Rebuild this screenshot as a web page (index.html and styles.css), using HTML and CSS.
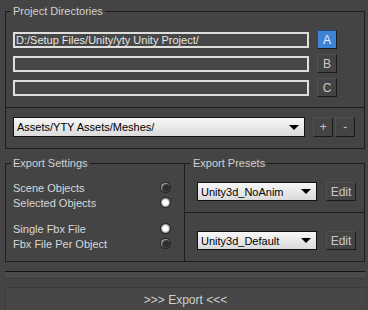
FILE: index.html
```html
<!DOCTYPE html>
<html lang="en">
<head>
  <meta charset="UTF-8">
  <meta name="viewport" content="width=device-width, initial-scale=1.0">
  <title>FBX Exporter</title>
  <link rel="stylesheet" href="styles.css">
</head>
<body>
  <div class="panel">
    <!-- Pastas do projeto -->
    <fieldset class="group dirs">
      <legend>Project Directories</legend>
      <div class="dir-row">
        <div class="field">D:/Setup Files/Unity/yty Unity Project/</div>
        <button class="btn active">A</button>
      </div>
      <div class="dir-row">
        <div class="field"></div>
        <button class="btn">B</button>
      </div>
      <div class="dir-row">
        <div class="field"></div>
        <button class="btn">C</button>
      </div>
    </fieldset>

    <div class="group assets">
      <div class="combo">Assets/YTY Assets/Meshes/<span class="arrow"></span></div>
      <button class="btn">+</button>
      <button class="btn">-</button>
    </div>

    <!-- Exportação -->
    <div class="export-row">
      <fieldset class="group settings">
        <legend>Export Settings</legend>
        <div class="opt-set">
          <div class="opt">Scene Objects<span class="radio"></span></div>
          <div class="opt">Selected Objects<span class="radio on"></span></div>
        </div>
        <div class="opt-set">
          <div class="opt">Single Fbx File<span class="radio on"></span></div>
          <div class="opt">Fbx File Per Object<span class="radio"></span></div>
        </div>
      </fieldset>

      <fieldset class="group presets">
        <legend>Export Presets</legend>
        <div class="preset">
          <div class="combo">Unity3d_NoAnim<span class="arrow"></span></div>
          <button class="btn">Edit</button>
        </div>
        <div class="preset last">
          <div class="combo">Unity3d_Default<span class="arrow"></span></div>
          <button class="btn">Edit</button>
        </div>
      </fieldset>
    </div>

    <div class="progress"></div>
    <button class="export">&gt;&gt;&gt; Export &lt;&lt;&lt;</button>
  </div>
</body>
</html>
```

FILE: styles.css
```css
/* Base */
body {
  margin: 0;
  background: #444444;
  color: #d6d6d6;
  font-family: "Liberation Sans", Arial, sans-serif;
  font-size: 11px;
  overflow: hidden;
}

.panel {
  width: 360px;
  margin-left: 5px;
  padding-top: 5px;
}

/* Grupos */
.group {
  margin: 0;
  border: 1px solid #1e1e1e;
  box-sizing: border-box;
  min-width: 0;
}

.group legend {
  padding: 0 2px;
  margin-left: -2px;
  line-height: 13px;
  color: #d2d2d2;
}

.dirs {
  padding: 12px 7px 10px;
  display: flex;
  flex-direction: column;
  gap: 5px;
}

.dir-row {
  display: flex;
  align-items: center;
  gap: 8px;
  height: 19px;
}

.field {
  width: 296px;
  height: 16px;
  box-sizing: border-box;
  border: 2px solid #dedede;
  background: #474747;
  color: #e4e4e4;
  padding-left: 1px;
  line-height: 12px;
  white-space: nowrap;
  overflow: hidden;
}

/* Botões */
.btn {
  width: 20px;
  height: 19px;
  padding: 0;
  box-sizing: border-box;
  background: #444444;
  color: #c8c8c8;
  font: inherit;
  font-size: 12px;
  border: 1px solid;
  border-color: #505050 #1a1a1a #1a1a1a #505050;
}

.btn.active {
  background: #3d84d8;
  color: #e8eef8;
  border-color: #2a4a70 #1a1a1a #1a1a1a #2a4a70;
}

.assets {
  border-top: none;
  padding: 9px 7px 11px;
  display: flex;
  align-items: center;
}

.assets .combo {
  width: 296px;
  height: 20px;
  margin-right: 8px;
}

.assets .btn {
  height: 20px;
  margin-right: 2px;
}

.combo {
  display: flex;
  align-items: center;
  justify-content: space-between;
  box-sizing: border-box;
  border: 1px solid #111;
  background: linear-gradient(#f7f7f7, #dadada);
  color: #000;
  padding: 0 5px 0 3px;
}

.arrow {
  width: 0;
  height: 0;
  border-left: 5px solid transparent;
  border-right: 5px solid transparent;
  border-top: 5px solid #000;
}

/* Exportação */
.export-row {
  display: flex;
  margin-top: 8px;
}

.settings {
  width: 180px;
  padding: 10px 14px 10px 7px;
  display: flex;
  flex-direction: column;
  gap: 11px;
}

.opt {
  display: flex;
  align-items: center;
  justify-content: space-between;
  height: 15px;
  color: #d8d8d8;
}

.radio {
  width: 9px;
  height: 9px;
  border-radius: 50%;
  background: radial-gradient(circle at 60% 55%, #2c2c2c 0 2.5px, #3e3e3e 3.5px);
  box-shadow: inset 1px 1px 0 #999, 0 0 0 1px #262626;
}

.radio.on {
  background: radial-gradient(circle, #ffffff 0 2.5px, #c4c4c4 3.5px, #8a8a8a 4.5px);
  box-shadow: 0 0 0 1px #262626;
}

.presets {
  width: 180px;
  border-left: none;
  padding: 0;
}

.presets legend {
  margin-left: 6px;
}

.preset {
  display: flex;
  align-items: center;
  gap: 9px;
  padding: 12px 0 11px 12px;
  border-bottom: 1px solid #1e1e1e;
}

.preset.last {
  border-bottom: none;
  padding-top: 18px;
}

.preset .combo {
  width: 120px;
  height: 19px;
}

.preset .btn {
  width: 30px;
}

.progress {
  margin-top: 9px;
  height: 6px;
  border-top: 1px solid #141414;
  border-bottom: 1px solid #3a3a3a;
  background: #4b4b4b;
}

.export {
  display: block;
  width: 360px;
  height: 26px;
  margin-top: 8px;
  padding: 0 0 2px;
  background: #464646;
  color: #cfcfcf;
  font: inherit;
  font-size: 12px;
  border: none;
  border-top: 1px solid #3a3a3a;
  border-left: 1px solid #3a3a3a;
}
```
